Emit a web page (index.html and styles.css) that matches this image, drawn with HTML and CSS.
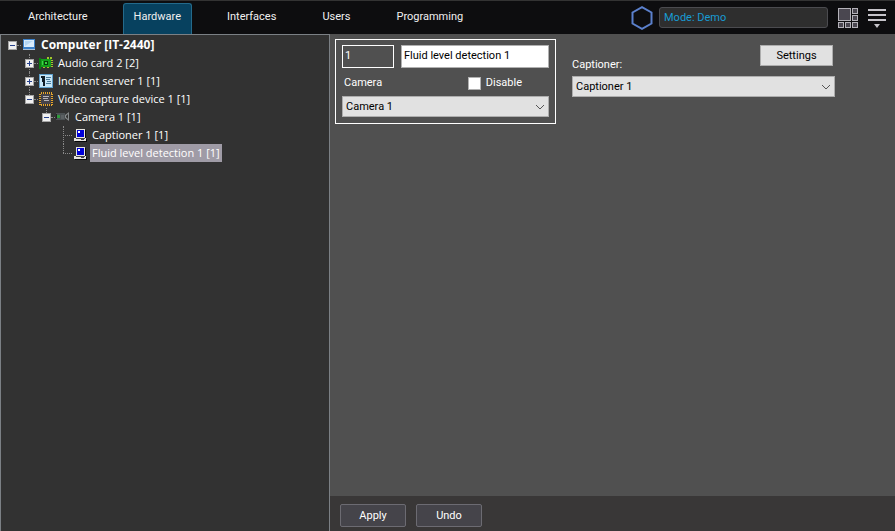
FILE: index.html
```html
<!DOCTYPE html>
<html lang="en">
<head>
  <meta charset="UTF-8" />
  <meta name="viewport" content="width=device-width, initial-scale=1.0"/>
  <title>Hardware</title>
  <link rel="stylesheet" href="styles.css">
</head>
<body>

  <header class="topbar">
    <nav class="tabs">
      <a href="#">Architecture</a>
      <a href="#" class="active">Hardware</a>
      <a href="#">Interfaces</a>
      <a href="#">Users</a>
      <a href="#">Programming</a>
    </nav>
    <div class="tools">
      <svg class="hexagon" width="22" height="24" viewBox="0 0 22 24" fill="none" stroke="#5b80cc" stroke-width="2">
        <path d="M11 1.2 L20.5 6.5 V17.5 L11 22.8 L1.5 17.5 V6.5 Z"/>
      </svg>
      <input class="mode" type="text" value="Mode: Demo" aria-label="Mode" readonly>
      <button class="icon-button" type="button" aria-label="Layouts">
        <svg width="20" height="20" viewBox="0 0 20 20" fill="#4a4750" stroke="#b4b2b9">
          <rect x="0.5" y="0.5" width="12" height="12"/>
          <rect x="14.5" y="0.5" width="5" height="5"/>
          <rect x="14.5" y="7.5" width="5" height="5"/>
          <rect x="0.5" y="14.5" width="5" height="5"/>
          <rect x="7.5" y="14.5" width="5" height="5"/>
          <rect x="14.5" y="14.5" width="5" height="5"/>
        </svg>
      </button>
      <button class="icon-button" type="button" aria-label="Menu">
        <svg width="18" height="20" viewBox="0 0 18 20" fill="#c6c4ca">
          <path d="M0 1h18v2H0zM0 6h18v2H0zM0 11h18v2H0zM6 16h6l-3 4z"/>
        </svg>
      </button>
    </div>
  </header>

  <div class="workspace">
    <aside class="sidebar">
      <ul class="tree">
        <li>
          <div class="row root">
            <button class="expander" type="button" aria-label="Collapse"></button><i class="link"></i>
            <svg class="icon" viewBox="0 0 16 16">
              <rect x="2" y="2" width="12" height="10" fill="#3c80c8"/>
              <rect x="3" y="3" width="10" height="7" fill="#d9ebfa"/>
              <path d="M4 9V4h8z" fill="#b4d6f3"/>
              <path d="M2 12h12v1H2z" fill="#a9bfd6"/>
            </svg>
            <span>Computer [IT-2440]</span>
          </div>
          <ul>
            <li>
              <div class="row">
                <button class="expander plus" type="button" aria-label="Expand"></button><i class="link"></i>
                <svg class="icon" viewBox="0 0 16 16">
                  <path d="M1 3h2v11H1z" fill="#0b7d12"/>
                  <path d="M3 4h10v8H3z" fill="#12a01c"/>
                  <path d="M6 6h4v4H6z" fill="#063f0a"/>
                  <path d="M7 7h2v2H7zM4 6h1v4H4z" fill="#3ed246"/>
                  <path d="M9 2h2v2H9zM12 2h2v2h-2zM13 5h2v1h-2zM13 7h2v1h-2zM13 9h2v1h-2zM13 11h2v1h-2zM5 12h2v1H5zM9 12h2v1H9z" fill="#a4c52b"/>
                </svg>
                <span>Audio card 2 [2]</span>
              </div>
            </li>
            <li>
              <div class="row">
                <button class="expander plus" type="button" aria-label="Expand"></button><i class="link"></i>
                <svg class="icon" viewBox="0 0 16 16">
                  <rect x="1" y="1" width="14" height="14" fill="#5fa0cc"/>
                  <rect x="2" y="2" width="12" height="12" fill="#c8e6f7"/>
                  <path d="M3 3h4v2H3zM4 5h3v4H4zM5 9h2v4H5z" fill="#101c26"/>
                  <path d="M8 4h5v1H8zM8 6h4v1H8zM9 8h4v1H9zM8 10h5v1H8z" fill="#4a7896"/>
                </svg>
                <span>Incident server 1 [1]</span>
              </div>
            </li>
            <li>
              <div class="row">
                <button class="expander" type="button" aria-label="Collapse"></button><i class="link"></i>
                <svg class="icon" viewBox="0 0 16 16">
                  <path d="M3 2h11M3 14h11M2 3v11M14 3v11" fill="none" stroke="#e8a62c" stroke-width="2" stroke-dasharray="1 1"/>
                  <rect x="3" y="3" width="10" height="10" fill="#45434a"/>
                  <path d="M5 5h6v1H5zM5 7h5v1H5zM6 9h5v1H6z" fill="#b5b3b8"/>
                </svg>
                <span>Video capture device 1 [1]</span>
              </div>
              <ul>
                <li>
                  <div class="row">
                    <button class="expander" type="button" aria-label="Collapse"></button><i class="link"></i>
                    <svg class="icon" viewBox="0 0 16 16">
                      <path d="M1 4h9v7H1z" fill="#4c5154"/>
                      <path d="M1 5h1v5H1z" fill="#222"/>
                      <path d="M2 6h3v3H2z" fill="#2f9a3c"/>
                      <path d="M6 6h3v4H6z" fill="#5c6164"/>
                      <path d="M10 6l4-3v9l-4-3z" fill="#85898b"/>
                      <path d="M11 7l2-2v5l-2-2z" fill="#333"/>
                    </svg>
                    <span>Camera 1 [1]</span>
                  </div>
                  <ul>
                    <li>
                      <div class="row leaf">
                        <i class="link"></i>
                        <svg class="icon" viewBox="0 0 16 16">
                          <path d="M5 3h9v9h1v3H3v-1h10z" fill="#080808"/>
                          <path d="M4 2h9v9H4zM2 11h12v3H2z" fill="#e6e4df"/>
                          <path d="M5 3h7v7H5z" fill="#0000d8"/>
                          <path d="M6 4h2v2H6z" fill="#fff"/>
                          <path d="M4 11h9v1H4zM9 12h3v1H9z" fill="#44434a"/>
                        </svg>
                        <span>Captioner 1 [1]</span>
                      </div>
                    </li>
                    <li>
                      <div class="row leaf selected">
                        <i class="link"></i>
                        <svg class="icon" viewBox="0 0 16 16">
                          <path d="M5 3h9v9h1v3H3v-1h10z" fill="#080808"/>
                          <path d="M4 2h9v9H4zM2 11h12v3H2z" fill="#e6e4df"/>
                          <path d="M5 3h7v7H5z" fill="#0000d8"/>
                          <path d="M6 4h2v2H6z" fill="#fff"/>
                          <path d="M4 11h9v1H4zM9 12h3v1H9z" fill="#44434a"/>
                        </svg>
                        <span>Fluid level detection 1 [1]</span>
                      </div>
                    </li>
                  </ul>
                </li>
              </ul>
            </li>
          </ul>
        </li>
      </ul>
    </aside>

    <main class="panel">
      <form class="settings" id="object-form">
        <div class="object-box">
          <div class="line">
            <input class="number" type="text" value="1" aria-label="Number" readonly>
            <input class="name" type="text" value="Fluid level detection 1" aria-label="Name">
          </div>
          <div class="line camera-line">
            <label for="camera">Camera</label>
            <label class="check"><input type="checkbox"> Disable</label>
          </div>
          <div class="select-wrap">
            <select id="camera"><option>Camera 1</option></select>
            <svg width="10" height="6" viewBox="0 0 10 6"><path d="M1 1l4 4 4-4"/></svg>
          </div>
        </div>

        <div class="captioner-box">
          <div class="captioner-head">
            <label for="captioner">Captioner:</label>
            <button class="light-button" type="button">Settings</button>
          </div>
          <div class="select-wrap">
            <select id="captioner"><option>Captioner 1</option></select>
            <svg width="10" height="6" viewBox="0 0 10 6"><path d="M1 1l4 4 4-4"/></svg>
          </div>
        </div>
      </form>

      <footer class="actions">
        <button type="submit" form="object-form">Apply</button>
        <button type="reset" form="object-form">Undo</button>
      </footer>
    </main>
  </div>

</body>
</html>
```
FILE: styles.css
```css
/* ---------------- GENERAL ---------------- */
* {
  box-sizing: border-box;
}

body {
  margin: 0;
  height: 100vh;
  display: flex;
  flex-direction: column;
  background: #505050;
  color: #fff;
  font-family: Roboto, "Liberation Sans", sans-serif;
  font-size: 11px;
  line-height: 14px;
  overflow: hidden;
}

button, input, select {
  font: inherit;
  color: inherit;
  margin: 0;
}

ul {
  list-style: none;
  margin: 0;
  padding: 0;
}

/* ---------------- TOP BAR ---------------- */
.topbar {
  flex: none;
  height: 34px;
  display: flex;
  justify-content: space-between;
  background: #0d0d0f;
  border-top: 1px solid #333;
}

.tabs {
  display: flex;
  gap: 24px;
  padding: 2px 0 0 17px;
}

.tabs a {
  padding: 6px 10px;
  border: 1px solid transparent;
  border-bottom: 0;
  border-radius: 3px 3px 0 0;
  color: #f0f0f0;
  text-decoration: none;
}

.tabs a.active {
  background: #07415f;
  border-color: #246a8b;
}

.tools {
  display: flex;
  align-items: center;
  gap: 10px;
  padding-right: 9px;
}

.mode {
  width: 169px;
  height: 21px;
  margin-left: -4px;
  padding: 0 4px;
  background: #2e2e2e;
  border: 1px solid #4b4b4f;
  border-radius: 3px;
  color: #189bd3;
}

.icon-button {
  display: flex;
  padding: 0;
  background: none;
  border: 0;
}

/* ---------------- TREE ---------------- */
.workspace {
  flex: 1;
  min-height: 0;
  display: flex;
}

.sidebar {
  flex: none;
  width: 330px;
  padding: 1px 0 0 7px;
  background: #323232;
  border: 1px solid #7b8085;
  border-bottom: 0;
  font-family: "Open Sans", "Noto Sans", sans-serif;
}

.tree ul {
  padding-left: 17px;
}

.tree li {
  position: relative;
}

/* dotted line that joins the siblings */
.tree ul > li::before {
  content: "";
  position: absolute;
  top: 0;
  left: 4px;
  height: 100%;
  border-left: 1px dotted #8a8a8a;
}

.tree ul > li:last-child::before {
  height: 9px;
}

.row {
  height: 18px;
  display: flex;
  align-items: center;
}

.row span {
  padding: 0 2px;
  margin-left: 2px;
  line-height: 18px;
  white-space: nowrap;
}

.root span {
  font-size: 12px;
  font-weight: bold;
}

.selected span {
  background: #9f9ba6;
}

.expander {
  position: relative;
  width: 9px;
  height: 9px;
  padding: 0;
  border: 1px solid #a5a5a5;
  background:
    linear-gradient(#26418c, #26418c) center / 5px 1px no-repeat,
    #f1f1f1;
}

.expander.plus {
  background:
    linear-gradient(#26418c, #26418c) center / 5px 1px no-repeat,
    linear-gradient(#26418c, #26418c) center / 1px 5px no-repeat,
    #f1f1f1;
}

.link {
  width: 4px;
  border-top: 1px dotted #8a8a8a;
}

.leaf .link {
  width: 9px;
  margin-left: 4px;
}

.icon {
  flex: none;
  width: 16px;
  height: 16px;
}

/* ---------------- SETTINGS ---------------- */
.panel {
  flex: 1;
  min-width: 0;
  display: flex;
  flex-direction: column;
}

.settings {
  flex: 1;
  display: flex;
  align-items: flex-start;
  gap: 16px;
  padding: 5px;
}

.object-box {
  width: 221px;
  padding: 5px 6px 6px;
  border: 1px solid #fff;
}

.line {
  display: flex;
  gap: 7px;
}

.number, .name {
  height: 23px;
  padding: 0 2px 2px;
  border: 1px solid #b0b0b0;
}

.number {
  width: 52px;
  background: #505050;
  border-color: #fff;
}

.name {
  flex: 1;
  min-width: 0;
  background: #fff;
  color: #000;
}

.camera-line {
  justify-content: space-between;
  align-items: center;
  height: 28px;
  padding: 2px 27px 0 2px;
}

.check {
  display: flex;
  align-items: center;
  gap: 5px;
}

.check input {
  appearance: none;
  width: 13px;
  height: 13px;
  background: #fff;
  border: 1px solid #b0b0b0;
}

.check input:checked {
  background: #246a8b;
}

.select-wrap {
  position: relative;
}

.select-wrap select {
  appearance: none;
  display: block;
  width: 100%;
  height: 21px;
  padding: 0 20px 0 3px;
  background: #e1e1e1;
  border: 1px solid #adadad;
  border-radius: 0;
  color: #000;
}

.select-wrap svg {
  position: absolute;
  top: 8px;
  right: 4px;
  fill: none;
  stroke: #555;
  pointer-events: none;
}

.captioner-box {
  width: 263px;
  padding-top: 6px;
}

.captioner-head {
  display: flex;
  justify-content: space-between;
  align-items: flex-start;
  padding-right: 2px;
  margin-bottom: 4px;
}

.captioner-head label {
  padding-top: 13px;
}

.light-button {
  width: 73px;
  height: 21px;
  padding: 0;
  background: #e1e1e1;
  border: 1px solid #adadad;
  color: #000;
}

/* ---------------- FOOTER ---------------- */
.actions {
  display: flex;
  gap: 10px;
  padding: 8px 10px 4px;
  background: #393737;
}

.actions button {
  width: 66px;
  height: 23px;
  padding: 0;
  background: #45444a;
  border: 1px solid #6c6b72;
  border-radius: 2px;
}
```
